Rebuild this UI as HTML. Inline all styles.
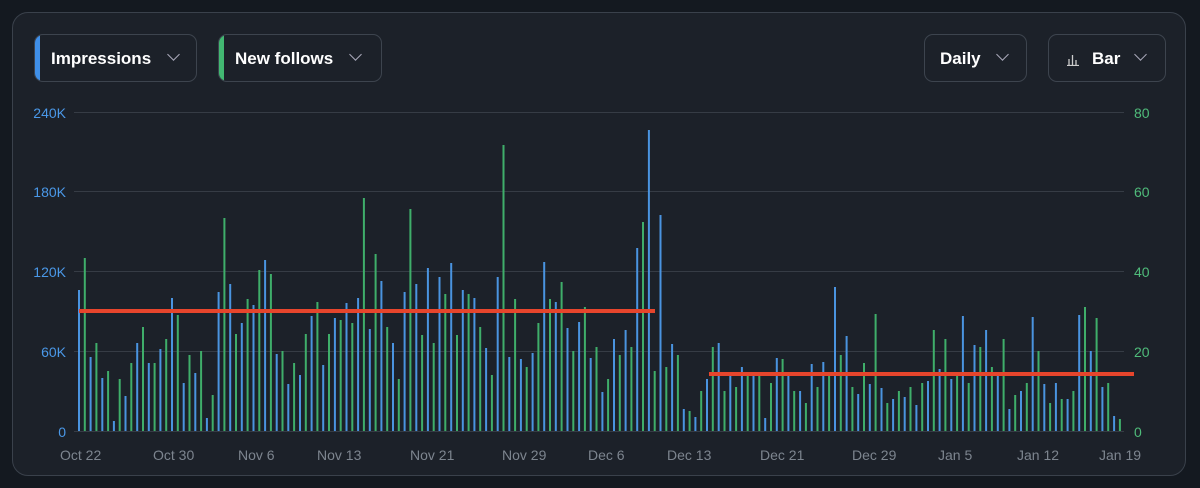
<!DOCTYPE html>
<html><head><meta charset="utf-8"><style>
body{margin:0;background:#141920;width:1200px;height:488px;overflow:hidden;font-family:"Liberation Sans",sans-serif;}
.card{position:absolute;left:12px;top:12px;width:1172px;height:462px;border:1px solid #3a414b;border-radius:16px;background:#1c2129;}
.btn{position:absolute;top:34px;height:48px;border:1px solid #3d444e;border-radius:9px;color:#fff;font-weight:bold;font-size:17px;line-height:48px;box-sizing:border-box;overflow:hidden;}
.btn .strip{position:absolute;left:0;top:0;bottom:0;width:5px;}
.chev{position:absolute;top:15px;width:8px;height:8px;border-right:1.5px solid #aab;border-bottom:1.5px solid #aab;transform:rotate(45deg);}
.lbl{position:absolute;font-size:14px;}
</style></head><body>
<div class="card"></div>
<div class="btn" style="left:34px;width:163px"><div class="strip" style="background:#3f8fe8"></div><span style="position:absolute;left:16px">Impressions</span><div class="chev" style="left:134px"></div></div>
<div class="btn" style="left:218px;width:164px"><div class="strip" style="background:#42b872"></div><span style="position:absolute;left:16px">New follows</span><div class="chev" style="left:132px"></div></div>
<div class="btn" style="left:924px;width:103px"><span style="position:absolute;left:15px">Daily</span><div class="chev" style="left:73px"></div></div>
<div class="btn" style="left:1048px;width:118px"><svg style="position:absolute;left:18px;top:19px" width="12" height="12"><g stroke="#ccc" stroke-width="1.3"><line x1="2" y1="5" x2="2" y2="11"/><line x1="5.5" y1="1" x2="5.5" y2="11"/><line x1="9" y1="6" x2="9" y2="11"/><line x1="0" y1="11.5" x2="12" y2="11.5"/></g></svg><span style="position:absolute;left:43px">Bar</span><div class="chev" style="left:87px"></div></div>
<svg id="c" width="1200" height="488" style="position:absolute;left:0;top:0"></svg>
<div class="lbl" style="left:30px;top:105px;color:#4a98e8;width:36px;text-align:right">240K</div>
<div class="lbl" style="left:30px;top:184px;color:#4a98e8;width:36px;text-align:right">180K</div>
<div class="lbl" style="left:30px;top:264px;color:#4a98e8;width:36px;text-align:right">120K</div>
<div class="lbl" style="left:30px;top:344px;color:#4a98e8;width:36px;text-align:right">60K</div>
<div class="lbl" style="left:30px;top:424px;color:#4a98e8;width:36px;text-align:right">0</div>
<div class="lbl" style="left:1134px;top:105px;color:#4fbb7a">80</div>
<div class="lbl" style="left:1134px;top:184px;color:#4fbb7a">60</div>
<div class="lbl" style="left:1134px;top:264px;color:#4fbb7a">40</div>
<div class="lbl" style="left:1134px;top:344px;color:#4fbb7a">20</div>
<div class="lbl" style="left:1134px;top:424px;color:#4fbb7a">0</div>
<div style="position:absolute;top:447px;left:0;width:1200px;color:#7d858f;font-size:14px">
<span style="position:absolute;left:60px">Oct 22</span><span style="position:absolute;left:153px">Oct 30</span><span style="position:absolute;left:238px">Nov 6</span><span style="position:absolute;left:317px">Nov 13</span><span style="position:absolute;left:410px">Nov 21</span><span style="position:absolute;left:502px">Nov 29</span><span style="position:absolute;left:588px">Dec 6</span><span style="position:absolute;left:667px">Dec 13</span><span style="position:absolute;left:760px">Dec 21</span><span style="position:absolute;left:852px">Dec 29</span><span style="position:absolute;left:938px">Jan 5</span><span style="position:absolute;left:1017px">Jan 12</span><span style="position:absolute;left:1099px">Jan 19</span></div>
<script>
var d=[[290,258],[357,343],[378,371],[421,379],[396,363],[343,327],[363,363],[349,339],[298,315],[383,355],[373,351],[418,395],[292,218],[284,334],[323,299],[305,270],[260,274],[354,351],[384,363],[375,334],[316,302],[365,334],[318,320],
[303,323],[298,198],[329,254],[281,327],[343,379],[292,209],[284,335],[268,343],[277,294],[263,335],[290,294],[298,327],[348,375],[277,145],[357,299],[359,367],[353,323],[262,299],[302,282],[328,351],[322,307],[358,347],
[392,379],[339,355],[330,347],[248,222],[130,371],[215,367],[344,355],[409,411],[417,391],[379,347],[343,391],[375,387],[367,375],[375,375],[418,383],[358,359],[375,391],[391,403],[364,387],[362,372],[287,355],[336,387],
[394,363],[384,314],[388,403],[399,391],[397,387],[405,383],[381,330],[369,339],[379,375],[316,383],[345,347],[330,367],[375,339],[409,395],[391,383],[317,351],[384,403],[383,399],[399,391],[315,307],[351,318],[387,383],[416,419]];
var s='';
[112,191,271,351].forEach(function(y){s+='<line x1="74" x2="1124" y1="'+(y+0.5)+'" y2="'+(y+0.5)+'" stroke="#363c45"/>';});
s+='<line x1="74" x2="1124" y1="431.5" y2="431.5" stroke="#363c45"/>';
d.forEach(function(p,i){var x=78+11.63*i;s+='<rect x="'+x.toFixed(1)+'" y="'+p[0]+'" width="2" height="'+(431-p[0])+'" fill="#4a94e0"/>';s+='<rect x="'+(x+5.8).toFixed(1)+'" y="'+p[1]+'" width="2" height="'+(431-p[1])+'" fill="#3fae6a"/>';});
s+='<rect x="79" y="309" width="576" height="4" fill="#e6452c"/><rect x="709" y="372" width="425" height="4" fill="#e6452c"/>';
document.getElementById('c').innerHTML=s;
</script>
</body></html>
